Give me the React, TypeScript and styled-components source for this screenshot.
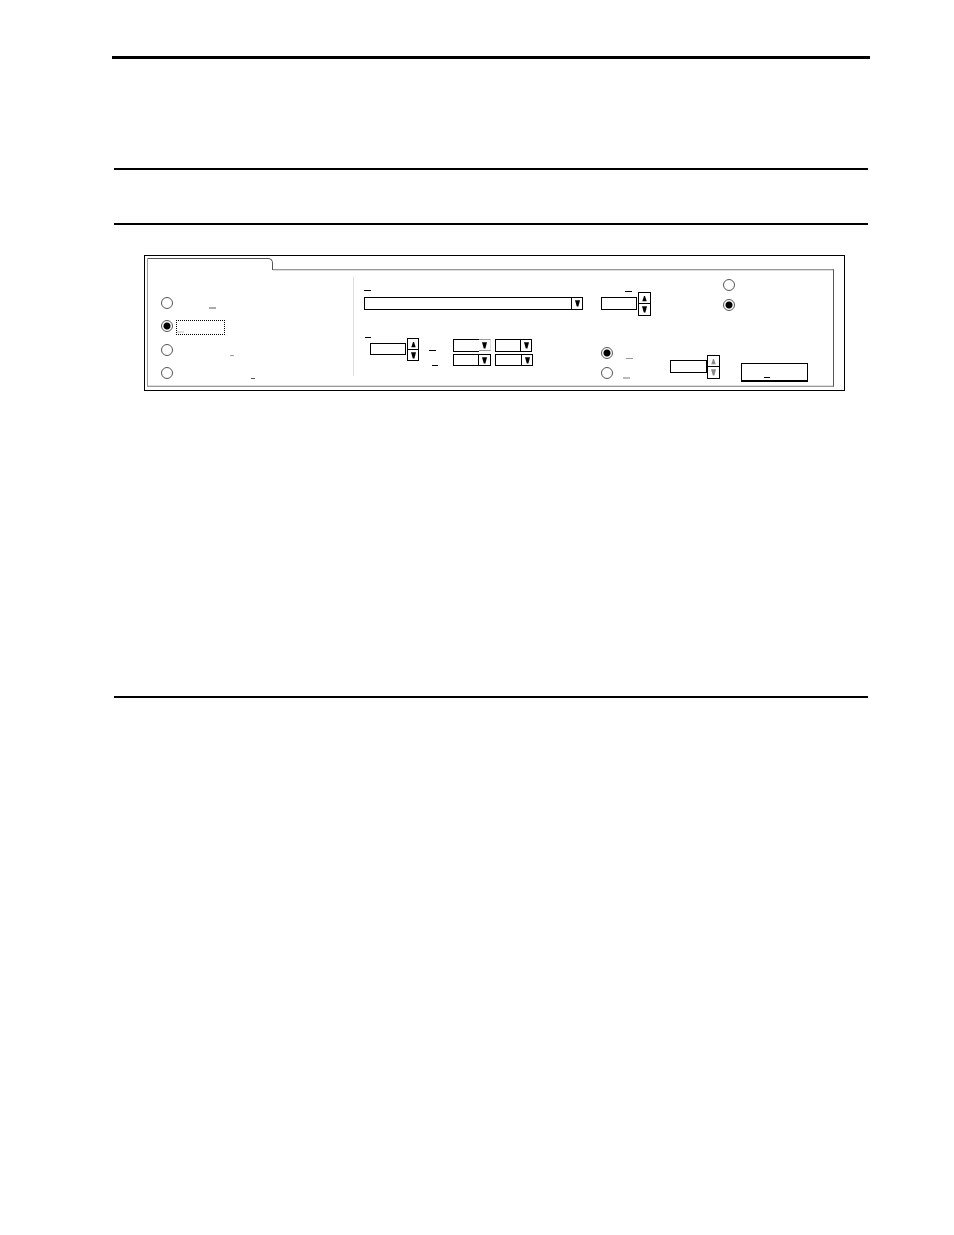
import React from "react";
import styled, { createGlobalStyle, css } from "styled-components";

const GlobalStyle = createGlobalStyle`
  *, *::before, *::after { box-sizing: border-box; }
  body { margin: 0; background: #fff; color: #000; font-family: "Liberation Sans", Arial, sans-serif; font-size: 10px; }
`;

const Page = styled.main`
  min-height: 100vh;
  padding: 56px 84px 0 112px;
`;

const TopRule = styled.hr`
  height: 3px;
  margin: 0 0 109px;
  border: 0;
  background: #000;
`;

const Heading = styled.header`
  height: 57px;
  margin: 0 2px 30px;
  border: solid #000;
  border-width: 2px 0;
`;

const SectionRule = styled.hr`
  height: 2px;
  margin: 305px 2px 0;
  border: 0;
  background: #000;
`;

const Frame = styled.form`
  margin: 0 25px 0 32px;
  padding: 2px 10px 3px 2px;
  border: 1px solid #000;
`;

const TabStrip = styled.div`
  display: flex;
  height: 13px;
  border-left: 1px solid #999;
`;

const Tab = styled.div`
  width: 125px;
  height: 12px;
  border: solid #555;
  border-width: 1px 1px 0 0;
  border-top-right-radius: 5px;
`;

const TabEdge = styled.div`
  flex: 1;
  margin-top: 11px;
  border-top: 1px solid #999;
  border-right: 1px solid #555;
  box-shadow: inset 0 1px #ddd;
`;

const Panel = styled.div`
  display: flex;
  height: 116px;
  border: solid #999;
  border-width: 0 1px 1px;
  border-right-color: #555;
  box-shadow: inset 0 -1px #ddd;
`;

const ModeGroup = styled.div`
  display: flex;
  flex-direction: column;
  justify-content: space-between;
  width: 205px;
  height: 82px;
  margin-top: 26px;
  padding-left: 13px;
`;

const Divider = styled.div`
  width: 1px;
  height: 99px;
  margin-top: 6px;
  background: #ddd;
`;

const RangeGroup = styled.div`
  flex: 1;
  padding: 19px 18px 0 10px;
`;

const SourceSlot = styled.div`
  padding-top: 6px;
`;

const OutputGroup = styled.div`
  width: 232px;
`;

const OutputTop = styled.div`
  display: flex;
  height: 76px;
`;

const OutputBottom = styled.div`
  display: flex;
`;

const LevelField = styled.div`
  width: 122px;
  padding-top: 20px;
`;

const RadioStack = styled.div<{ $width?: number; $top?: number }>`
  display: flex;
  flex-direction: column;
  gap: 8px;
  width: ${(p) => (p.$width ? `${p.$width}px` : "auto")};
  padding-top: ${(p) => p.$top ?? 0}px;
`;

const RadioRow = styled.div`
  display: flex;
  height: 12px;
`;

const Radio = styled.input.attrs({ type: "radio" })`
  appearance: none;
  flex: none;
  width: 12px;
  height: 12px;
  margin: 0;
  border: 1px solid #555;
  border-radius: 50%;
  background: #fff;
  &:checked {
    background: radial-gradient(circle, #000 3px, #fff 4px);
  }
`;

const MarkLabel = styled.label<{ $indent?: number }>`
  display: flex;
  align-items: flex-end;
  padding-left: ${(p) => p.$indent ?? 0}px;
`;

const FocusLabel = styled(MarkLabel)`
  width: 49px;
  height: 15px;
  margin-left: 3px;
  padding-bottom: 1px;
  border: 1px dotted #000;
`;

const Mark = styled.span<{ $width?: number; $tone?: string; $thick?: boolean }>`
  width: ${(p) => p.$width ?? 7}px;
  height: ${(p) => (p.$thick ? 2 : 1)}px;
  background: ${(p) => p.$tone ?? "#000"};
`;

const SelectBox = styled.span<{ $width?: number; $height: number }>`
  display: grid;
  width: ${(p) => (p.$width ? `${p.$width}px` : "100%")};
  height: ${(p) => p.$height}px;
`;

const NativeSelect = styled.select`
  appearance: none;
  grid-area: 1 / 1;
  width: 100%;
  height: 100%;
  min-height: 0;
  margin: 0;
  padding: 0 14px 0 2px;
  border: 1px solid #000;
  border-radius: 0;
  background: #fff;
`;

const ArrowCell = styled.span<{ $soft?: boolean; $width?: number }>`
  grid-area: 1 / 1;
  z-index: 1;
  display: flex;
  align-items: center;
  justify-content: center;
  justify-self: end;
  width: ${(p) => p.$width ?? 12}px;
  pointer-events: none;
  border: 1px solid #000;
  ${(p) =>
    p.$soft
      ? css`
          margin-bottom: 1px;
          border-color: #999 #ddd #999 #fff;
          background: #fff;
          box-shadow: 0 1px #fff;
          border-left: 0;
        `
      : ""}
`;

const SpinBox = styled.div<{ $indent?: number; $gap?: number }>`
  display: flex;
  gap: ${(p) => p.$gap ?? 1}px;
  padding-left: ${(p) => p.$indent ?? 0}px;
`;

const SpinInput = styled.input.attrs({ type: "text" })<{ $width?: number; $height?: number }>`
  width: ${(p) => p.$width ?? 36}px;
  height: ${(p) => p.$height ?? 13}px;
  margin: 5px 0 0;
  padding: 0 2px;
  border: 1px solid #000;
  border-radius: 0;
  background: #fff;
`;

const SpinButtons = styled.div<{ $width?: number; $height?: number }>`
  display: flex;
  flex-direction: column;
  width: ${(p) => p.$width ?? 13}px;
  height: ${(p) => p.$height ?? 24}px;
  border: 1px solid #000;
`;

const SpinButton = styled.button.attrs({ type: "button" })<{ $tone?: string }>`
  display: flex;
  flex: none;
  align-items: center;
  justify-content: center;
  height: 10px;
  margin: 0;
  padding: 0;
  border: 0;
  background: #fff;
  color: ${(p) => p.$tone ?? "#000"};
  & + & {
    flex: 1;
    border-top: 1px solid #000;
  }
`;

const PagesRow = styled.div`
  display: flex;
  gap: 10px;
  margin-top: 27px;
`;

const PagesField = styled.div`
  width: 55px;
`;

const TimeRows = styled.div`
  display: flex;
  flex-direction: column;
  gap: 2px;
  padding-top: 2px;
`;

const TimeRow = styled.div`
  display: flex;
  gap: 4px;
`;

const TimeLabel = styled(MarkLabel)`
  width: 20px;
  height: 12px;
`;

const ApplyButton = styled.button.attrs({ type: "button" })`
  display: flex;
  align-items: flex-end;
  width: 67px;
  height: 19px;
  margin: 16px 0 0 21px;
  padding: 0 0 2px 22px;
  border: 1px solid #000;
  border-bottom-width: 2px;
  border-radius: 0;
  background: #fff;
`;

const SpinSlot = styled.div`
  padding-top: 8px;
`;

const DownArrow = () => (
  <svg width="5" height="7" viewBox="0 0 5 7" fill="currentColor" aria-hidden="true">
    <path d="M0 0.3H5L3.4 6.6H1.8Z" />
  </svg>
);

const UpArrow = () => (
  <svg width="5" height="7" viewBox="0 0 5 7" fill="currentColor" aria-hidden="true">
    <path d="M2 1H3L4.7 6.2H0.3Z" />
  </svg>
);

type DropDownProps = {
  id: string;
  name: string;
  width?: number;
  height?: number;
  arrowWidth?: number;
  soft?: boolean;
};

const DropDown = ({ id, name, width, height = 13, arrowWidth, soft }: DropDownProps) => (
  <SelectBox $width={width} $height={height}>
    <NativeSelect id={id} aria-label={name} />
    <ArrowCell $soft={soft} $width={arrowWidth}>
      <DownArrow />
    </ArrowCell>
  </SelectBox>
);

type SpinnerProps = {
  id: string;
  name: string;
  indent?: number;
  gap?: number;
  inputWidth?: number;
  compact?: boolean;
  tone?: string;
};

const Spinner = ({ id, name, indent, gap, inputWidth, compact, tone }: SpinnerProps) => (
  <SpinBox $indent={indent} $gap={gap}>
    <SpinInput id={id} aria-label={name} $width={inputWidth} $height={compact ? 12 : 13} />
    <SpinButtons $width={compact ? 12 : 13} $height={compact ? 23 : 24}>
      <SpinButton aria-label="Increase" $tone={tone}>
        <UpArrow />
      </SpinButton>
      <SpinButton aria-label="Decrease" $tone={tone}>
        <DownArrow />
      </SpinButton>
    </SpinButtons>
  </SpinBox>
);

export default function App() {
  return (
    <>
      <GlobalStyle />
      <Page>
        <TopRule />
        <Heading />
        <Frame>
          <TabStrip>
            <Tab />
            <TabEdge />
          </TabStrip>
          <Panel>
            <ModeGroup role="radiogroup" aria-label="Mode">
              <RadioRow>
                <Radio id="mode-1" name="mode" aria-label="Mode 1" />
                <MarkLabel htmlFor="mode-1" $indent={36}>
                  <Mark $tone="#aaa" $thick />
                </MarkLabel>
              </RadioRow>
              <RadioRow>
                <Radio id="mode-2" name="mode" aria-label="Mode 2" defaultChecked />
                <FocusLabel htmlFor="mode-2">
                  <Mark $tone="#ddd" $thick />
                </FocusLabel>
              </RadioRow>
              <RadioRow>
                <Radio id="mode-3" name="mode" aria-label="Mode 3" />
                <MarkLabel htmlFor="mode-3" $indent={57}>
                  <Mark $width={4} $tone="#999" />
                </MarkLabel>
              </RadioRow>
              <RadioRow>
                <Radio id="mode-4" name="mode" aria-label="Mode 4" />
                <MarkLabel htmlFor="mode-4" $indent={78}>
                  <Mark $width={4} $tone="#555" />
                </MarkLabel>
              </RadioRow>
            </ModeGroup>
            <Divider />
            <RangeGroup>
              <MarkLabel htmlFor="source">
                <Mark />
              </MarkLabel>
              <SourceSlot>
                <DropDown id="source" name="Source" />
              </SourceSlot>
              <PagesRow>
                <PagesField>
                  <MarkLabel htmlFor="count" $indent={1}>
                    <Mark $width={6} />
                  </MarkLabel>
                  <Spinner id="count" name="Count" indent={6} compact />
                </PagesField>
                <TimeRows>
                  <TimeRow>
                    <TimeLabel htmlFor="from-a">
                      <Mark />
                    </TimeLabel>
                    <DropDown id="from-a" name="From, first part" width={38} soft />
                    <DropDown id="from-b" name="From, second part" width={37} />
                  </TimeRow>
                  <TimeRow>
                    <TimeLabel htmlFor="to-a" $indent={3}>
                      <Mark $width={6} />
                    </TimeLabel>
                    <DropDown id="to-a" name="To, first part" width={38} height={12} arrowWidth={13} />
                    <DropDown id="to-b" name="To, second part" width={38} height={12} />
                  </TimeRow>
                </TimeRows>
              </PagesRow>
            </RangeGroup>
            <OutputGroup>
              <OutputTop>
                <LevelField>
                  <MarkLabel htmlFor="level" $indent={24}>
                    <Mark />
                  </MarkLabel>
                  <Spinner id="level" name="Level" />
                </LevelField>
                <RadioStack $top={8} role="radiogroup" aria-label="Type">
                  <Radio name="type" aria-label="Type 1" />
                  <Radio name="type" aria-label="Type 2" defaultChecked />
                </RadioStack>
              </OutputTop>
              <OutputBottom>
                <RadioStack $width={69} role="radiogroup" aria-label="Limit">
                  <RadioRow>
                    <Radio id="limit-1" name="limit" aria-label="Limit 1" defaultChecked />
                    <MarkLabel htmlFor="limit-1" $indent={13}>
                      <Mark $tone="#999" />
                    </MarkLabel>
                  </RadioRow>
                  <RadioRow>
                    <Radio id="limit-2" name="limit" aria-label="Limit 2" />
                    <MarkLabel htmlFor="limit-2" $indent={10}>
                      <Mark $tone="#bbb" $thick />
                    </MarkLabel>
                  </RadioRow>
                </RadioStack>
                <SpinSlot>
                  <Spinner id="limit-value" name="Limit value" gap={0} inputWidth={37} tone="#888" />
                </SpinSlot>
                <ApplyButton aria-label="Apply">
                  <Mark $width={6} />
                </ApplyButton>
              </OutputBottom>
            </OutputGroup>
          </Panel>
        </Frame>
        <SectionRule />
      </Page>
    </>
  );
}
